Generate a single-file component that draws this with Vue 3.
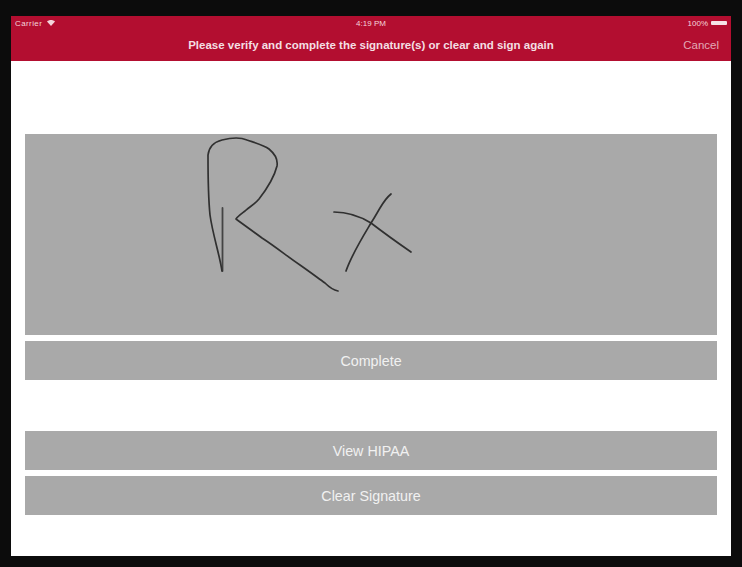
<template>
  <div class="page">
    <div class="device">
      <header class="topbar">
        <div class="status">
          <div class="status-left">
            <span class="carrier">Carrier</span>
            <svg class="wifi" width="8" height="6" viewBox="0 0 8 6">
              <path d="M0 1.6C2.3-.4 5.7-.4 8 1.6L4 6z" fill="#f3d5db" />
            </svg>
          </div>
          <span class="clock">4:19 PM</span>
          <div class="status-right">
            <span>100%</span>
            <span class="battery"></span>
          </div>
        </div>
        <div class="navrow">
          <span class="title">Please verify and complete the signature(s) or clear and sign again</span>
          <a href="#" class="cancel" @click.prevent>Cancel</a>
        </div>
      </header>

      <main class="content">
        <div class="signature">
          <svg width="692" height="201" viewBox="25 134 692 201">
            <g fill="none" stroke="#303030" stroke-width="1.7" stroke-linecap="round" stroke-linejoin="round">
              <path d="M222.5 208V271" stroke-width="1.8" stroke="#444" />
              <path :d="letterR" />
              <path :d="crossA" />
              <path :d="crossB" />
            </g>
          </svg>
        </div>
        <button class="action first">Complete</button>
        <button class="action spaced">View HIPAA</button>
        <button class="action">Clear Signature</button>
      </main>
    </div>
  </div>
</template>

<script setup>
// signature strokes, traced by hand
const letterR =
  'M222 271C219 252 213 236 210 215C208 195 208 172 208 155C209 147 214 142 222 140C230 138 240 137 247 140C256 143 264 145 269 149C275 154 278 160 277 166C274 178 266 190 259 199C254 205 249 207 245 211C241 214 238 216 236 219C244 225 254 232 262 238C276 247 288 257 300 265C310 272 318 278 325 283C330 288 333 290 338 291'
const crossA = 'M334 212C346 212 358 215 371 223C384 233 398 243 411 252'
const crossB = 'M391 194C386 198 383 203 380 208C377 213 375 217 371 223C362 238 352 254 346 271'
</script>

<style>
html,
body {
  margin: 0;
  background: #0c0c0c;
}
</style>

<style scoped>
.page {
  width: 742px;
  height: 567px;
  padding: 16px 11px 11px;
  box-sizing: border-box;
  background: #0c0c0c;
  font-family: "Liberation Sans", Arial, sans-serif;
}

.device {
  height: 540px;
  background: #fff;
  display: flex;
  flex-direction: column;
}

.topbar {
  height: 45px;
  background: #b30e30;
  color: #f3d5db;
}

.status {
  height: 14px;
  padding: 0 4px 0 4px;
  display: grid;
  grid-template-columns: 1fr auto 1fr;
  align-items: center;
  font-size: 8px;
}

.carrier {
  letter-spacing: 0.4px;
}

.status-left {
  display: flex;
  align-items: center;
  gap: 5px;
}

.status-right {
  display: flex;
  align-items: center;
  justify-content: flex-end;
  gap: 3px;
}

.battery {
  width: 16px;
  height: 4px;
  border-radius: 1px;
  background: #f6e3e7;
}

.navrow {
  position: relative;
  height: 31px;
  display: flex;
  align-items: center;
  justify-content: center;
}

.title {
  font-size: 11.5px;
  font-weight: 700;
  color: #f4dfe3;
  padding-bottom: 1px;
}

.cancel {
  position: absolute;
  right: 12px;
  top: 9px;
  font-size: 11.5px;
  color: #e2a9b5;
  text-decoration: none;
}

.content {
  padding: 73px 14px 0;
  display: flex;
  flex-direction: column;
}

.signature {
  height: 201px;
  background: #a9a9a9;
}

.signature svg {
  display: block;
}

.action {
  height: 39px;
  margin-top: 6px;
  border: 0;
  padding: 0;
  background: #a9a9a9;
  color: #f1f1f1;
  font-family: inherit;
  font-size: 14.3px;
}

.action.spaced {
  margin-top: 51px;
}
</style>
